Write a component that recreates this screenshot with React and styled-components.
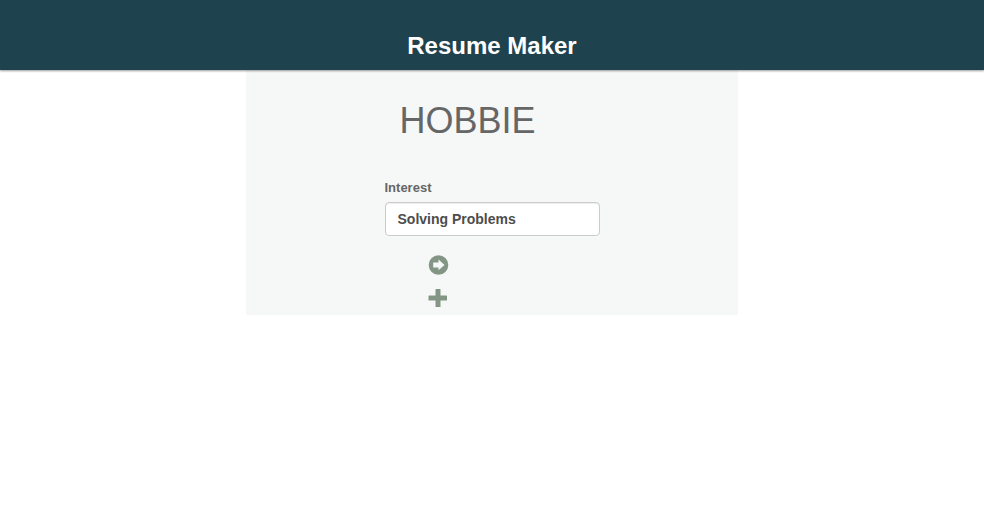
import React, { useState } from "react";
import styled, { createGlobalStyle } from "styled-components";

const GlobalStyle = createGlobalStyle`
  *, *::before, *::after { box-sizing: border-box; }
  body {
    margin: 0;
    background: #fff;
    font-family: "Liberation Sans", Arial, sans-serif;
  }
`;

const Header = styled.header`
  display: flex;
  justify-content: center;
  padding: 32px 16px 10px;
  background: #1f434e;
  color: #fff;
  box-shadow: 0 1px 2px rgba(0, 0, 0, 0.4);
  position: relative;
`;

const Brand = styled.h1`
  margin: 0;
  font-size: 24px;
  line-height: 28px;
  font-weight: 700;
`;

const Panel = styled.main`
  width: 50%;
  margin: 0 auto;
  padding: 31px 0 7px;
  background: #f6f8f8;
`;

const Title = styled.h2`
  margin: 0 0 39px;
  padding-right: 49px;
  text-align: center;
  font-size: 36px;
  line-height: 40px;
  font-weight: 400;
  color: #666;
`;

const Form = styled.form`
  display: flex;
  flex-direction: column;
  width: 215px;
  margin: 0 auto;
`;

const Label = styled.label`
  margin-bottom: 6px;
  font-size: 13px;
  line-height: 16px;
  font-weight: 700;
  color: #666;
`;

const TextInput = styled.input`
  width: 100%;
  height: 34px;
  padding: 6px 12px;
  border: 1px solid #ccc;
  border-radius: 4px;
  background: #fff;
  box-shadow: inset 0 1px 1px rgba(0, 0, 0, 0.075);
  font: 700 14px/20px "Liberation Sans", Arial, sans-serif;
  color: #4d4d4d;
`;

const Actions = styled.div`
  display: flex;
  flex-direction: column;
  gap: 13px;
  margin: 19px 0 0 43px;
`;

const IconButton = styled.button`
  display: flex;
  width: 21px;
  height: 20px;
  padding: 0;
  border: 0;
  background: none;
  color: #839686;
  cursor: pointer;
`;

const Glyph = styled.svg`
  width: 21px;
  height: 20px;
  fill: currentColor;
`;

export default function App() {
  const [interest, setInterest] = useState("Solving Problems");
  return (
    <>
      <GlobalStyle />
      <Header>
        <Brand>Resume Maker</Brand>
      </Header>
      <Panel>
        <Title>HOBBIE</Title>
        <Form onSubmit={(e) => e.preventDefault()}>
          <Label htmlFor="interest">Interest</Label>
          <TextInput
            id="interest"
            type="text"
            value={interest}
            onChange={(e) => setInterest(e.target.value)}
          />
          <Actions>
            <IconButton type="submit" aria-label="Next">
              <Glyph viewBox="0 0 21 20" aria-hidden="true">
                <path fillRule="evenodd" d="M10.5 0.2a9.8 9.8 0 1 1 0 19.6a9.8 9.8 0 0 1 0-19.6zM10.5 4.6v2.8H5.2v5h5.3v2.8l6-5.3z" />
              </Glyph>
            </IconButton>
            <IconButton type="button" aria-label="Add interest">
              <Glyph viewBox="0 0 21 20" aria-hidden="true">
                <path d="M8 1h4q.5 0 .5.5V7.5h6q.5 0 .5.5v4q0 .5-.5.5h-6v6q0 .5-.5.5H8q-.5 0-.5-.5v-6H1q-.5 0-.5-.5V8q0-.5.5-.5h6.500v-6Q7.500 1 8 1z" />
              </Glyph>
            </IconButton>
          </Actions>
        </Form>
      </Panel>
    </>
  );
}
